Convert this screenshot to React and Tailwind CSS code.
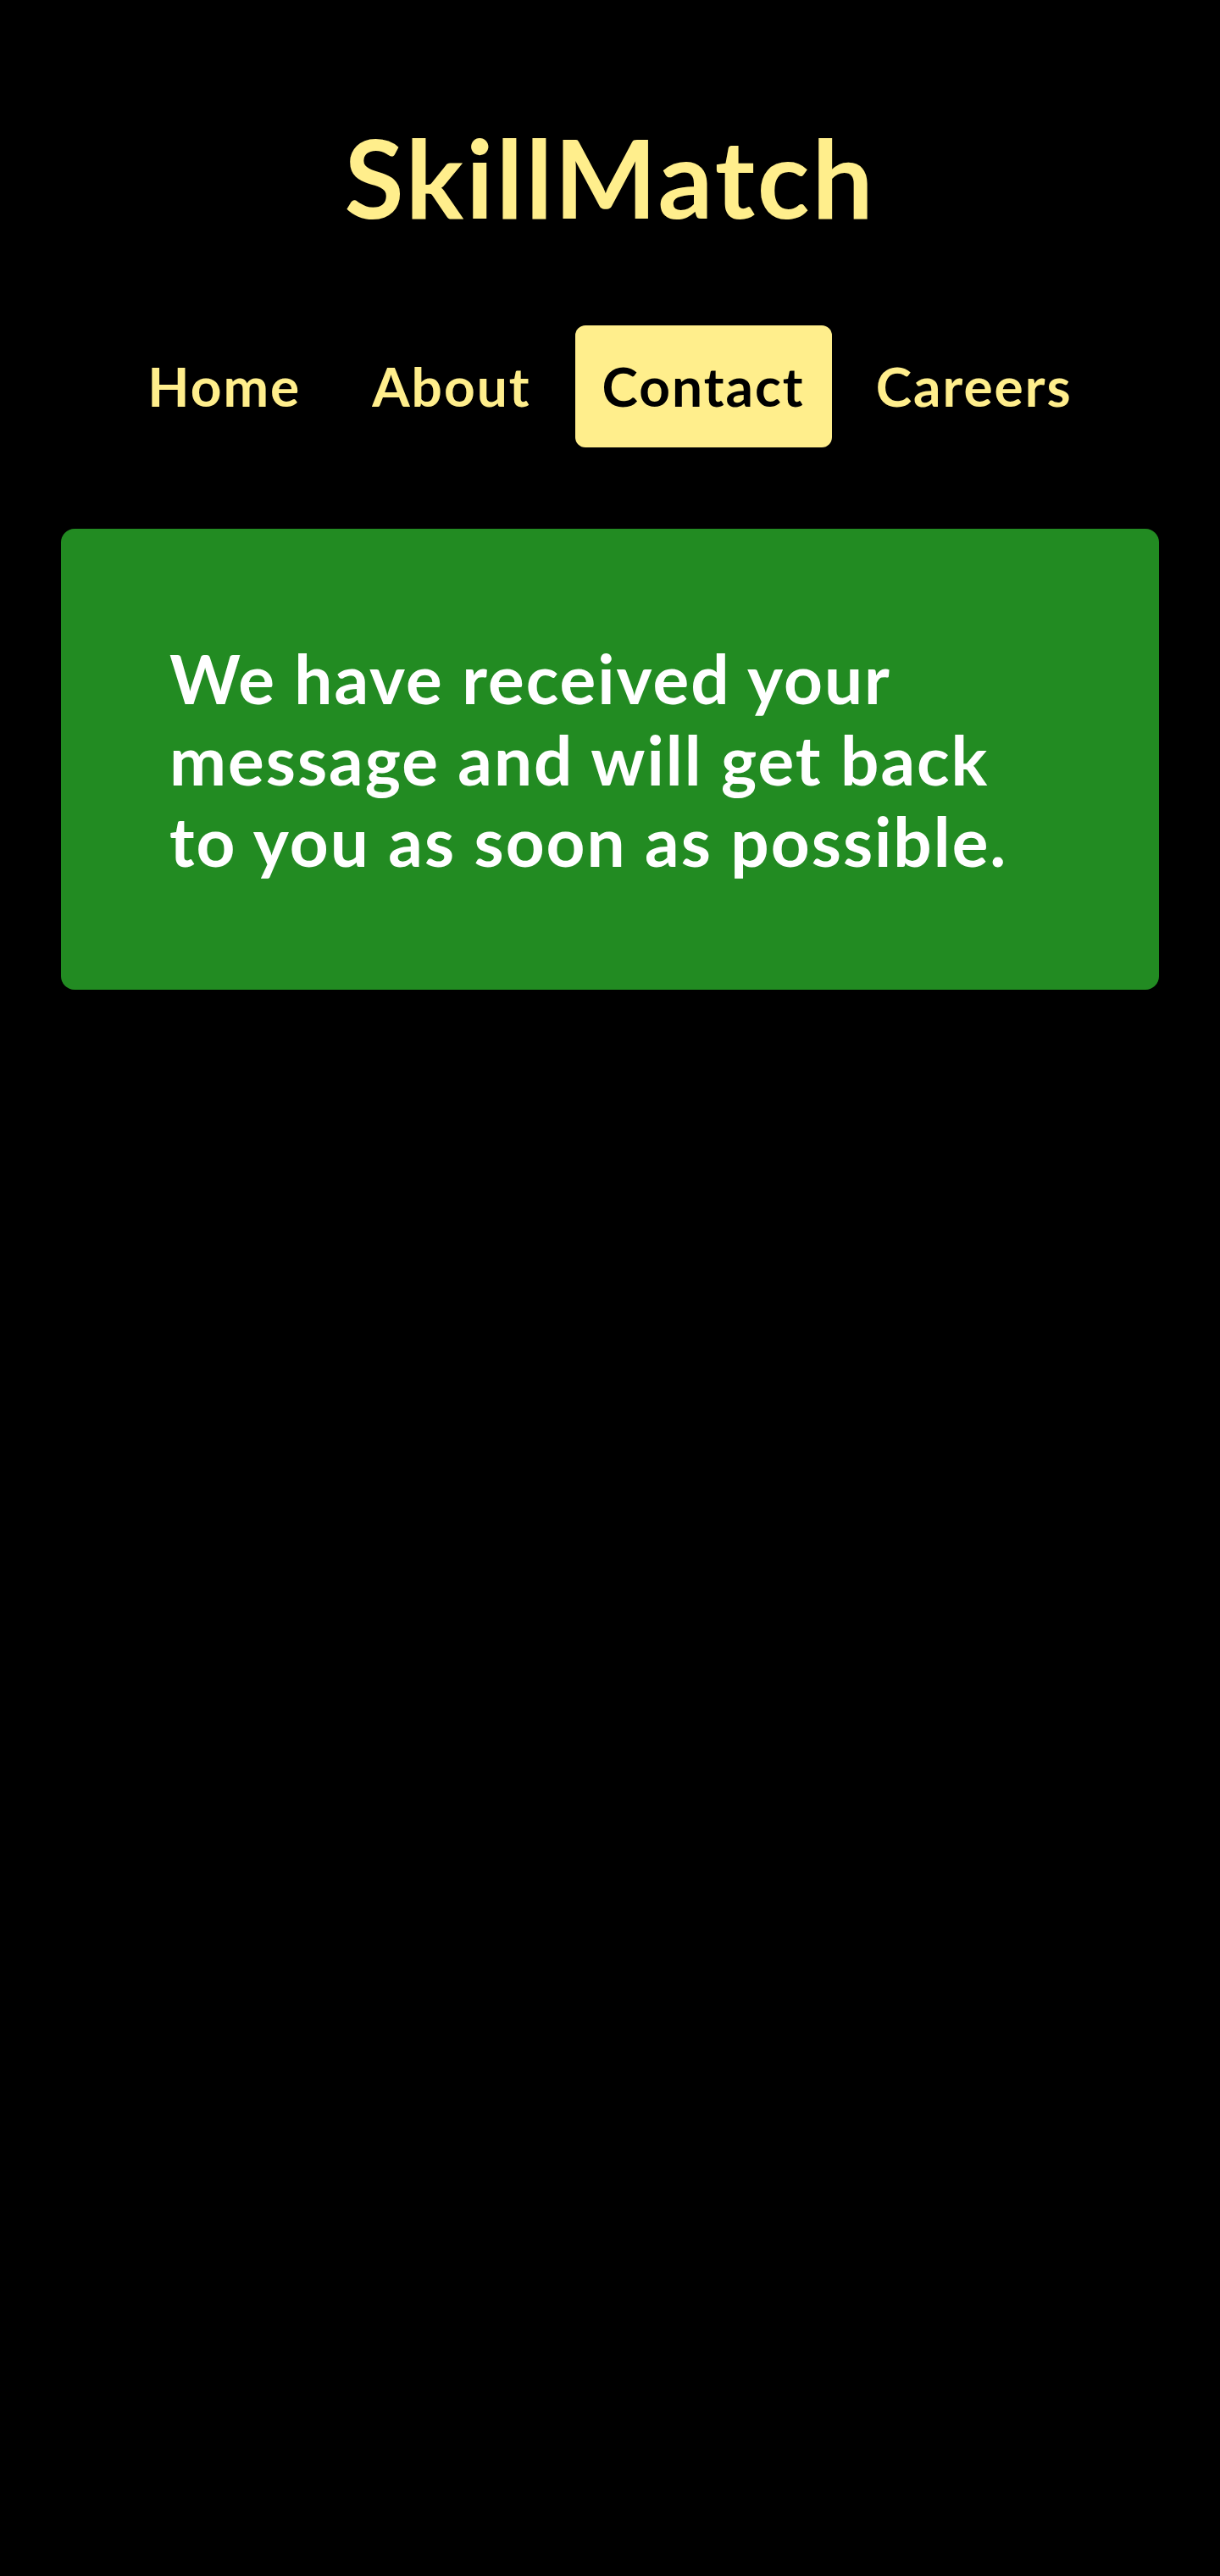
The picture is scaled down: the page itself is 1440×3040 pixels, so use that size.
const links = [
  { label: 'Home', active: false },
  { label: 'About', active: false },
  { label: 'Contact', active: true },
  { label: 'Careers', active: false },
]

export default function App() {
  return (
    <div className="min-h-[3040px] bg-black font-['Lato','Open_Sans',sans-serif]">
      {/* Brand */}
      <header className="pt-[145px] text-center">
        <h1 className="text-[128px] leading-[128px] font-bold tracking-[3px] text-[#FFEE8C]">SkillMatch</h1>
      </header>

      {/* Navigation */}
      <nav className="mt-[111px] flex justify-center gap-5">
        {links.map((link) => (
          <a
            key={link.label}
            href="#"
            className={`px-8 py-8 rounded-xl text-[64px] leading-[80px] font-bold tracking-[2px] ${
              link.active ? 'bg-[#FFEE8C] text-black' : 'text-[#FFEE8C]'
            }`}
          >
            {link.label}
          </a>
        ))}
      </nav>

      {/* Confirmation */}
      <main className="mx-[72px] mt-[96px] rounded-2xl bg-[#228B22] p-32">
        <p className="text-[80px] leading-[96px] font-bold tracking-[2px] text-white">
          <span className="block">We have received your</span>
          <span className="block">message and will get back</span>
          <span className="block">to you as soon as possible.</span>
        </p>
      </main>
    </div>
  )
}
